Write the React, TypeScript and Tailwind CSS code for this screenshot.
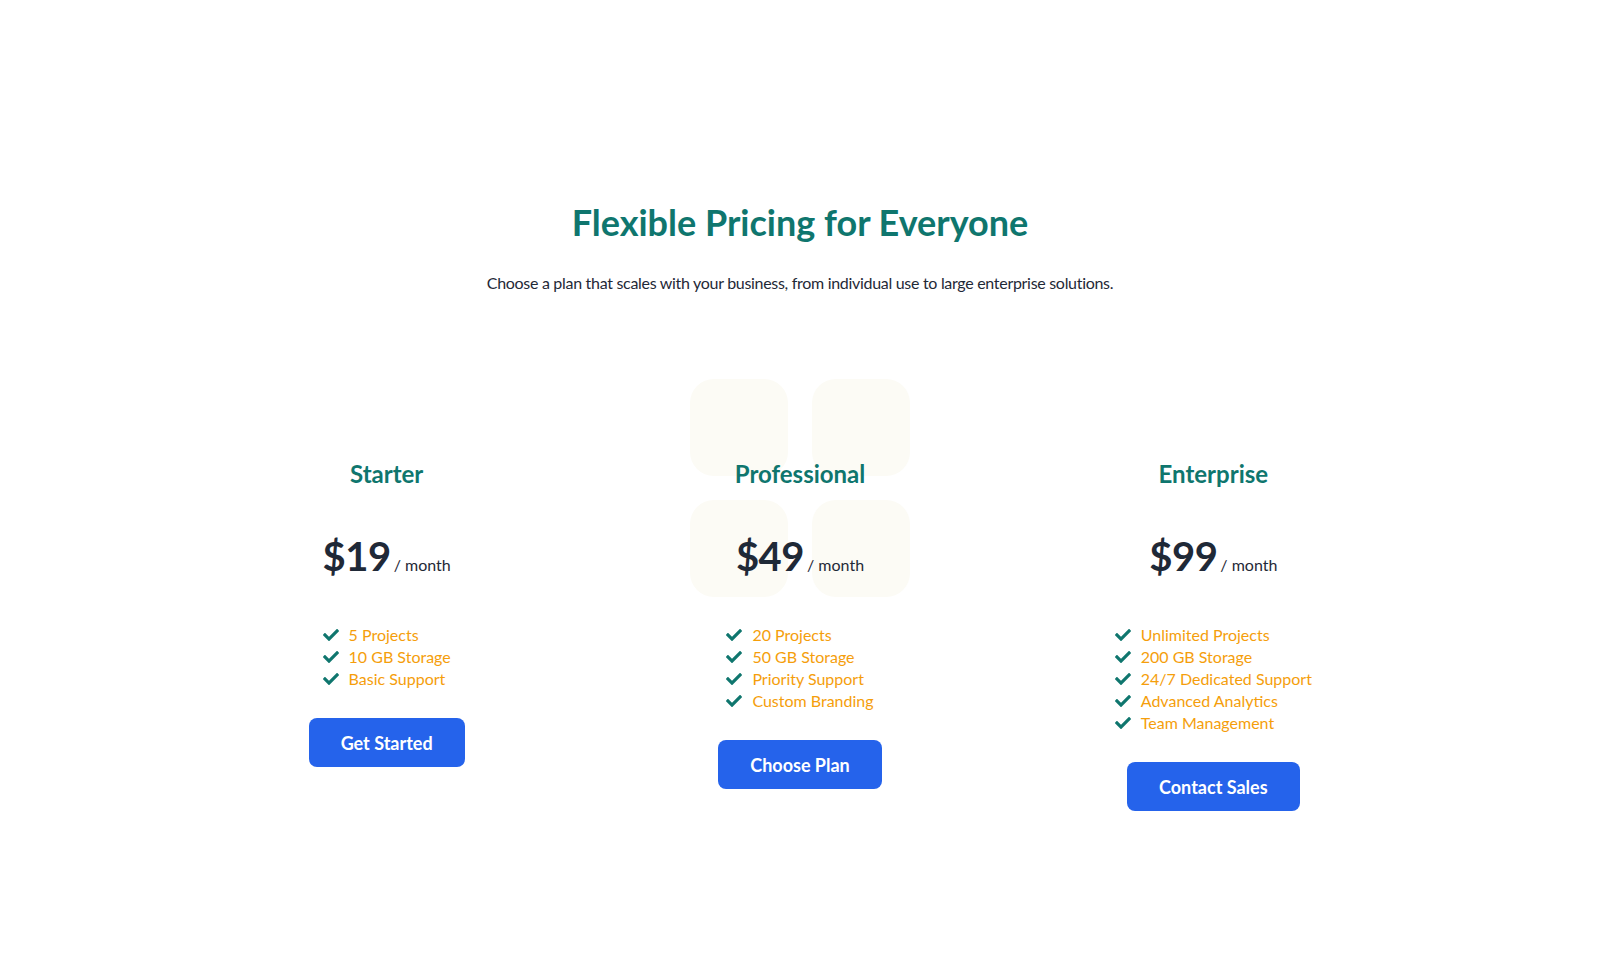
import React from 'react';
import { FaCheck } from 'react-icons/fa';

type Plan = {
  name: string;
  price: string;
  features: string[];
  cta: string;
  featured?: boolean;
};

const plans: Plan[] = [
  { name: 'Starter', price: '$19', features: ['5 Projects', '10 GB Storage', 'Basic Support'], cta: 'Get Started' },
  {
    name: 'Professional',
    price: '$49',
    features: ['20 Projects', '50 GB Storage', 'Priority Support', 'Custom Branding'],
    cta: 'Choose Plan',
    featured: true,
  },
  {
    name: 'Enterprise',
    price: '$99',
    features: ['Unlimited Projects', '200 GB Storage', '24/7 Dedicated Support', 'Advanced Analytics', 'Team Management'],
    cta: 'Contact Sales',
  },
];

// soft tiles sitting behind the featured plan
const Tiles = () => (
  <div className="absolute left-1/2 top-[-79px] -translate-x-1/2 w-[220px] grid grid-cols-[98px_98px] gap-x-6 gap-y-6 pointer-events-none">
    <div className="w-[98px] h-[97px] rounded-3xl bg-[#fcfbf5]" />
    <div className="w-[98px] h-[97px] rounded-3xl bg-[#fcfbf5]" />
    <div className="w-[98px] h-[97px] rounded-3xl bg-[#fcfbf5]" />
    <div className="w-[98px] h-[97px] rounded-3xl bg-[#fcfbf5]" />
  </div>
);

function PlanCard({ plan }: { plan: Plan }) {
  return (
    <div className="relative flex flex-col items-center">
      {plan.featured && <Tiles />}
      <h3 className="relative text-2xl font-bold text-[#0f766e]">{plan.name}</h3>
      <div className="relative mt-11 flex items-baseline gap-[3px] text-[#1f2937]">
        <span className="text-[40px] leading-[44px] font-bold tracking-[-0.5px]">{plan.price}</span>
        <span className="text-base">/ month</span>
      </div>
      <ul className="relative mt-[46px] text-left">
        {plan.features.map((f) => (
          <li key={f} className="flex items-center gap-2.5 text-base leading-[22px] text-[#f59e0b]">
            <FaCheck className="text-[#0f766e] shrink-0" size={16} />
            <span>{f}</span>
          </li>
        ))}
      </ul>
      <button className="relative mt-7 h-[49px] px-8 rounded-lg bg-[#2563eb] text-white text-lg font-bold">
        {plan.cta}
      </button>
    </div>
  );
}

export default function App() {
  return (
    <div className="min-h-screen bg-white font-['Lato',sans-serif]">
      <section className="max-w-7xl mx-auto px-8 pt-[202px] pb-24">
        <div className="text-center">
          <h2 className="text-4xl font-bold text-[#0f766e]">Flexible Pricing for Everyone</h2>
          <p className="mt-[29px] text-base tracking-[-0.3px] text-[#1f2937]">
            Choose a plan that scales with your business, from individual use to large enterprise solutions.
          </p>
        </div>
        <div className="mt-[163px] grid grid-cols-3 gap-6">
          {plans.map((p) => (
            <PlanCard key={p.name} plan={p} />
          ))}
        </div>
      </section>
    </div>
  );
}
